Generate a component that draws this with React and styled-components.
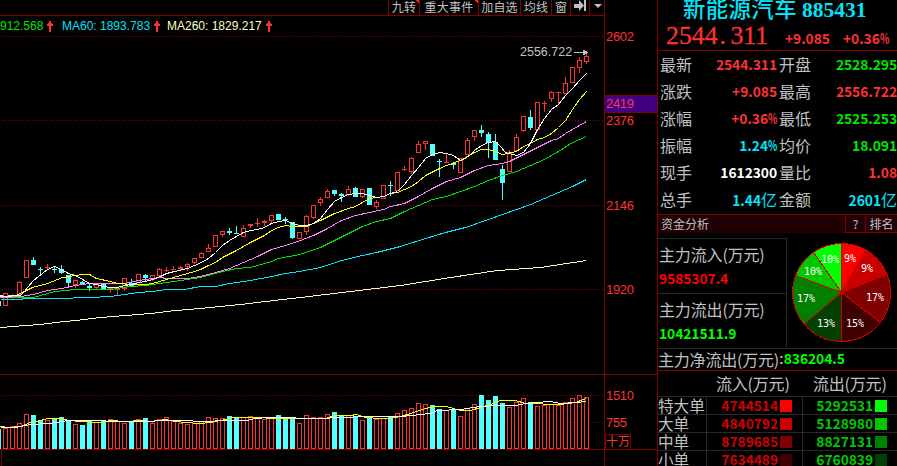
import React from 'react';
import styled, { createGlobalStyle } from 'styled-components';

const C = {
  line: '#800000',
  up: '#ff3232',
  down: '#54ffff',
  cyan: '#00e4f8',
  green: '#00e600',
  lime: '#00ff00',
  grey: '#c0c0c0',
  white: '#ffffff',
  grid: '#282828',
};

const Global = createGlobalStyle`
  html, body { margin: 0; background: #000; overflow: hidden; }
  * { box-sizing: border-box; }
`;

const Screen = styled.div`
  display: flex;
  width: 897px;
  height: 466px;
  overflow: hidden;
  background: #000;
  color: ${C.grey};
  font-family: 'Liberation Sans', 'Noto Sans CJK SC', sans-serif;
  white-space: nowrap;
`;

/* ---------- left: chart ---------- */

const Main = styled.div`
  flex: 0 0 604px;
  display: flex;
  flex-direction: column;
`;

const Toolbar = styled.div`
  display: flex;
  justify-content: flex-end;
  height: 16px;
  border-bottom: 1px solid ${C.line};
`;

const Tool = styled.div`
  width: ${(p) => p.$w}px;
  height: 15px;
  display: flex;
  justify-content: center;
  border-left: 1px solid ${C.line};
  font: 12px/13px 'Noto Sans CJK SC', sans-serif;
  letter-spacing: 0.2px;
  ${(p) =>
    p.$flag &&
    'background: linear-gradient(225deg, #ff2020 2.5px, transparent 2.6px);'}

  svg {
    flex: none;
  }
`;

const Legend = styled.div`
  display: flex;
  align-items: center;
  height: 20px;
  font-size: 12px;
`;

const LegendItem = styled.span`
  display: flex;
  align-items: center;
  width: ${(p) => p.$w}px;
  gap: 4px;
  color: ${(p) => p.$c};
`;

const Plot = styled.svg`
  display: block;
  flex: none;
  text {
    font-family: 'Liberation Sans', 'Noto Sans CJK SC', sans-serif;
  }
`;

const Axis = styled.div`
  flex: 0 0 53px;
  border-left: 1px solid ${C.line};
`;

const UpArrow = () => (
  <svg width="6" height="11" viewBox="0 0 6 11" shapeRendering="crispEdges">
    <path d="M2 0h2v2h1v1h1v2H4v6H2V5H0V3h1V2h1z" fill={C.up} />
  </svg>
);

/* body top, body bottom, high, low, 1 = falling, volume top */
const BARS = [
  [301, 306, 301, 306, 1, 429], [293, 306, 293, 306, 0, 428], [295, 297, 294, 299, 0, 426],
  [282, 295, 281, 295, 0, 423], [260, 278, 260, 278, 0, 414], [260, 265, 257, 265, 1, 415],
  [269, 270, 267, 275, 1, 420], [267, 268, 264, 270, 0, 420], [269, 270, 267, 273, 1, 419],
  [269, 273, 265, 274, 1, 417], [275, 283, 275, 288, 1, 420], [280, 285, 280, 288, 0, 424],
  [282, 284, 281, 284, 1, 425], [286, 288, 283, 291, 1, 421], [284, 288, 284, 290, 0, 422],
  [284, 289, 284, 289, 1, 420], [288, 289, 288, 293, 0, 419], [289, 290, 286, 295, 0, 421],
  [278, 289, 278, 291, 0, 423], [283, 286, 279, 286, 1, 422], [274, 283, 274, 283, 0, 419],
  [275, 278, 274, 281, 1, 418], [275, 280, 275, 281, 0, 423], [269, 276, 268, 276, 0, 419],
  [270, 271, 267, 272, 0, 417], [269, 270, 266, 270, 0, 421], [267, 269, 266, 271, 0, 423],
  [264, 267, 263, 271, 0, 424], [258, 263, 258, 264, 0, 423], [253, 258, 252, 258, 0, 421],
  [248, 252, 244, 252, 0, 417], [235, 247, 235, 247, 0, 418], [231, 235, 231, 237, 0, 418],
  [231, 233, 228, 235, 1, 416], [233, 234, 226, 234, 1, 417], [228, 237, 225, 237, 0, 417],
  [224, 226, 224, 228, 0, 416], [223, 224, 218, 227, 0, 418], [221, 223, 220, 226, 0, 419],
  [215, 221, 215, 223, 0, 417], [214, 220, 214, 220, 1, 415], [219, 220, 217, 224, 1, 417],
  [222, 238, 222, 239, 1, 418], [232, 239, 232, 239, 0, 423], [216, 232, 215, 235, 0, 415],
  [205, 218, 205, 219, 0, 417], [199, 203, 197, 206, 0, 417], [191, 198, 189, 198, 0, 414],
  [190, 194, 190, 196, 1, 412], [194, 196, 193, 202, 1, 415], [189, 195, 186, 196, 0, 415],
  [188, 197, 187, 197, 1, 416], [189, 197, 189, 198, 0, 420], [188, 205, 188, 205, 1, 417],
  [202, 207, 200, 209, 0, 419], [185, 199, 185, 199, 0, 418], [185, 186, 181, 196, 1, 416],
  [172, 191, 172, 191, 0, 413], [169, 170, 166, 171, 0, 410], [158, 172, 157, 174, 0, 408],
  [144, 153, 141, 153, 0, 403], [141, 144, 141, 150, 0, 404], [144, 156, 144, 156, 1, 405],
  [161, 162, 159, 177, 1, 409], [162, 163, 154, 163, 0, 410], [163, 165, 162, 169, 1, 409],
  [158, 173, 158, 173, 0, 416], [140, 155, 138, 155, 0, 408], [130, 137, 130, 141, 0, 404],
  [130, 133, 125, 137, 1, 395], [134, 143, 132, 158, 1, 400], [142, 160, 134, 160, 1, 396],
  [169, 183, 165, 200, 1, 403], [152, 172, 150, 172, 0, 407], [137, 151, 134, 151, 0, 402],
  [116, 131, 116, 132, 0, 398], [117, 128, 110, 130, 1, 402], [102, 130, 102, 130, 0, 406],
  [103, 104, 101, 112, 0, 405], [92, 99, 91, 102, 0, 404], [92, 93, 92, 105, 0, 405],
  [83, 94, 77, 94, 0, 402], [67, 83, 67, 83, 0, 398], [60, 68, 57, 73, 0, 395],
  [56, 62, 53, 64, 0, 397],
];

const PRICE_LINES = [
  ['#ffffb9', '0,327 25,325 40,324 55,322 75,320 100,317 125,315 150,313 175,310 200,308 240,304 282,299 300,297 350,291 400,285 450,277 497,270 540,267 586,260'],
  ['#00e4f8', '0,299 20,299 24,298 70,298 75,297 90,297 110,296 124,294 138,292 152,291 166,289 184,289 200,286 215,286 229,283 250,280 271,276 285,273 299,271 320,267 341,260 362,255 376,252 400,246 425,238 445,232 465,227 488,219 502,214 516,209 530,204 544,198 558,192 572,186 586,179'],
  ['#00e600', '0,297 33,297 54,291 75,289 82,289 110,289 130,286 145,285 152,284 166,282 180,280 200,277 222,271 236,268 250,267 264,263 271,261 278,258 299,254 320,247 334,240 348,233 362,226 376,221 390,218 404,211 418,205 432,199 446,196 460,191 474,186 488,180 502,175 516,171 530,165 544,159 558,151 572,142 586,136'],
  ['#ff80ff', '0,297 20,296 33,294 47,290 61,288 75,285 89,283 110,283 124,283 138,280 152,278 160,277 166,278 187,278 200,276 215,272 229,268 243,262 257,256 271,249 285,245 300,240 313,235 327,228 341,220 355,215 369,212 383,209 390,206 404,203 418,196 432,188 446,181 460,177 474,170 488,165 502,163 509,161 523,154 537,147 551,140 558,138 565,133 572,129 586,121'],
  ['#ffff00', '0,296 15,295 22,292 32,287 47,283 62,277 75,275 82,274 89,274 96,278 110,281 117,283 131,284 145,284 152,283 166,279 180,275 194,271 200,269 208,265 215,262 222,257 236,250 250,242 264,235 271,230 278,227 285,225 292,226 306,226 313,223 320,220 334,213 348,208 355,206 362,202 369,198 376,197 383,196 390,193 397,192 411,186 418,181 425,175 439,168 446,165 460,160 474,152 481,149 488,149 495,151 502,154 516,151 523,146 530,143 537,139 544,137 551,133 558,127 565,120 572,109 579,99 586,91'],
  ['#ffffff', '0,295 4,296 20,295 23,292 33,280 47,269 54,266 61,269 68,273 75,275 82,279 89,283 96,284 103,286 110,287 117,287 124,285 131,284 138,282 145,281 152,279 160,276 166,273 174,271 187,268 194,265 201,262 208,258 215,252 222,245 229,240 236,236 243,232 250,230 257,229 264,227 271,223 278,221 285,220 292,223 299,225 306,225 313,223 320,218 327,209 334,201 341,197 348,194 355,193 362,193 369,195 376,197 383,196 390,193 397,191 404,184 411,175 418,167 425,158 432,154 439,152 446,153 453,155 460,160 467,157 474,150 481,145 488,142 495,141 500,146 505,152 516,155 523,152 530,143 537,129 544,118 551,109 558,104 565,95 572,88 579,80 586,73'],
];

const VOLUME_LINES = [
  ['#ffff00', '0,426 8,427 20,426 30,422 40,420 47,418 62,418 68,420 80,421 100,422 110,420 125,421 140,420 150,421 165,419 175,421 185,422 200,423 210,422 225,419 232,417 260,417 270,418 325,418 335,415 350,415 356,414 365,417 380,418 390,418 400,416 410,413 425,408 435,406 446,406 460,410 470,410 480,407 490,404 500,400 515,400 525,403 560,404 575,402 586,398'],
  ['#ffffff', '0,427 15,427 30,424 50,423 62,421 68,420 100,420 110,421 150,421 160,420 184,420 200,421 210,421 219,420 247,420 254,418 270,417 290,417 300,418 325,418 335,417 350,417 355,416 400,416 412,415 420,414 430,413 437,410 460,409 480,406 497,405 515,405 525,403 535,402 550,401 560,403 575,402 586,401'],
];

const barX = (i) => 7 * (i - 1) + 3;

const Candle = ({ x, bar: [top, bottom, high, low, falling] }) => {
  const color = falling ? C.down : C.up;
  const h = bottom - top;
  const hollow = !falling && h > 2;
  return (
    <g fill={color}>
      {top > high && <rect x={x + 2} y={high} width="1" height={top - high} />}
      {low > bottom && <rect x={x + 2} y={bottom} width="1" height={low - bottom} />}
      {hollow ? (
        <rect x={x + 0.5} y={top + 0.5} width="4" height={h - 1} fill="#000" stroke={color} />
      ) : (
        <rect x={x} y={top} width="5" height={h} />
      )}
    </g>
  );
};

const VolumeBar = ({ x, top, falling }) =>
  falling ? (
    <rect x={x} y={top} width="5" height={449 - top} fill={C.down} />
  ) : (
    <rect x={x + 0.5} y={top + 0.5} width="4" height={448 - top} fill="#000" stroke={C.up} />
  );

const Dotted = ({ y }) => (
  <path d={`M2 ${y + 0.5}H604`} stroke="#900000" strokeDasharray="1 2" />
);

const Curve = ({ color, points }) => (
  <polyline points={points} transform="translate(.5 .5)" fill="none" stroke={color} />
);

const PriceChart = () => (
  <Plot width="604" height="338" viewBox="0 36 604 338">
    <g shapeRendering="crispEdges">
      {[36, 120, 205, 289].map((y) => <Dotted key={y} y={y} />)}
      {BARS.map((b, i) => <Candle key={i} x={barX(i)} bar={b} />)}
      {PRICE_LINES.map(([c, p]) => <Curve key={c} color={c} points={p} />)}
      <path d="M574 52.5H584" stroke={C.grey} />
      <path d="M583 50h2v1h2v1h1v1h-1v1h-2v1h-2z" fill={C.grey} />
    </g>
    <text x="520" y="56" fontSize="12.5" fill={C.grey}>2556.722</text>
  </Plot>
);

const VolumeChart = () => (
  <Plot width="604" height="92" viewBox="0 374 604 92" shapeRendering="crispEdges">
    <path d="M0 374.5H604" stroke={C.line} />
    <Dotted y={395} />
    <Dotted y={422} />
    {BARS.map((b, i) => <VolumeBar key={i} x={barX(i)} top={b[5]} falling={b[4]} />)}
    {VOLUME_LINES.map(([c, p]) => <Curve key={c} color={c} points={p} />)}
    <path d="M0 449.5H604M1.5 450V466" stroke={C.line} />
  </Plot>
);

const AxisScale = () => (
  <Plot width="52" height="466" viewBox="605 0 52 466" fontSize="13" fill={C.up}>
    <g shapeRendering="crispEdges" fill="none" stroke={C.line}>
      <path d="M605 374.5H657M605 449.5H657" />
      <rect x="604.5" y="95.5" width="53" height="17" fill="#400080" />
      <rect x="605.5" y="434.5" width="25" height="15" />
    </g>
    {[[2602, 41], [2376, 125], [2146, 210], [1920, 294], [1510, 400], [755, 427]].map(([t, y]) => (
      <text key={t} x="606" y={y} textLength={t === 755 ? 21 : 28}>{t}</text>
    ))}
    <text x="606" y="108" textLength="28" fill="#ff3260">2419</text>
    <text x="606" y="446" fontSize="12">十万</text>
  </Plot>
);

/* ---------- right: quote panel ---------- */

const Panel = styled.aside`
  flex: 0 0 240px;
  min-width: 0;
  display: flex;
  flex-direction: column;
  border-left: 1px solid ${C.line};
  font-size: 16px;
`;

const Cjk = styled.span`
  font-family: 'Noto Sans CJK SC', sans-serif;
  font-size: ${(p) => p.$fs || 16}px;
  font-weight: 400;
  line-height: ${(p) => p.$lh || 18}px;
  letter-spacing: ${(p) => p.$ls || 0}px;
`;

const Digits = styled.span`
  font: bold 13.8px/17px 'Noto Sans CJK SC', sans-serif;
  letter-spacing: -0.05px;
  color: ${(p) => p.$c};
`;

const Percent = styled.span`
  display: inline-block;
  width: 9px;
  transform: scaleX(0.7);
  transform-origin: 0 50%;
`;

const Num = ({ children, c }) => {
  const unit = children.slice(-1);
  const body = /[%亿]/.test(unit) ? children.slice(0, -1) : children;
  return (
    <Digits $c={c}>
      {body}
      {unit === '%' && <Percent>%</Percent>}
      {unit === '亿' && <Cjk $lh={17}>亿</Cjk>}
    </Digits>
  );
};

const Head = styled.header`
  height: 51px;
  flex: none;
  border-bottom: 1px solid ${C.line};
`;

const Title = styled.div`
  height: 19px;
  padding-left: 25px;
  color: ${C.cyan};
  font: bold 21.5px/15px 'Liberation Serif', 'Noto Sans CJK SC', serif;

  span {
    font: 500 22.4px/15px 'Noto Sans CJK SC', sans-serif;
    letter-spacing: 0.4px;
    margin-right: 5px;
  }
`;

const PriceLine = styled.div`
  display: grid;
  grid-template-columns: 119px 58px 1fr;
  align-items: center;
  height: 31px;
  padding-left: 8px;

  > span {
    margin-top: 5px;
  }
`;

const BigPrice = styled.div`
  font: 25.8px/33px 'Liberation Serif', serif;
  color: ${C.up};
  -webkit-text-stroke: 0.3px ${C.up};
`;

const Dot = styled.span`
  display: inline-block;
  width: 12.8px;
  padding-left: 2px;
`;

const Quotes = styled.div`
  flex: none;
  height: 163px;
`;

const QuoteRow = styled.div`
  display: grid;
  grid-template-columns: 33px 84px 35px 85px;
  align-items: center;
  height: 27px;
  padding-left: 2px;

  > :nth-child(odd) {
    margin-top: -1px;
  }
  > :nth-child(even) {
    text-align: right;
  }
  > :nth-child(3) {
    margin-left: 2px;
  }
`;

const QUOTES = [
  ['最新', '2544.311', C.up, '开盘', '2528.295', C.green],
  ['涨跌', '+9.085', C.up, '最高', '2556.722', C.up],
  ['涨幅', '+0.36%', C.up, '最低', '2525.253', C.green],
  ['振幅', '1.24%', C.cyan, '均价', '18.091', C.green],
  ['现手', '1612300', C.white, '量比', '1.08', C.up],
  ['总手', '1.44亿', C.cyan, '金额', '2601亿', C.cyan],
];

const SectionBar = styled.div`
  flex: none;
  display: flex;
  height: 19px;
  background: #200004;
  border-top: 1px solid ${C.line};
  font: 12px/18px 'Noto Sans CJK SC', sans-serif;
`;

const SectionTitle = styled.div`
  flex: 1;
  padding-left: 3px;
`;

const SectionButton = styled.div`
  width: ${(p) => p.$w}px;
  border-left: 1px solid ${C.line};
  border-bottom: 1px solid ${C.line};
  text-align: center;
`;

const Flow = styled.div`
  flex: none;
  display: grid;
  grid-template-columns: 129px 1fr;
  height: 115px;
`;

const FlowBoxes = styled.div`
  margin-top: 5px;
  border-right: 1px solid ${C.grid};
`;

const FlowBox = styled.div`
  height: 55px;
  padding: 6px 0 0 1px;
  border-top: 1px solid ${C.grid};
  display: flex;
  flex-direction: column;
  gap: 7px;
`;

const NetRow = styled.div`
  flex: none;
  display: flex;
  align-items: center;
  height: 23px;
  padding-bottom: 2px;
  border-top: 1px solid ${C.grid};
  border-bottom: 1px solid ${C.line};

  b {
    font-size: 14px;
  }
`;

const TableHead = styled.div`
  flex: none;
  display: grid;
  grid-template-columns: 97px 1fr;
  height: 25px;
  padding: 3px 0 0 58px;
`;

const Table = styled.div`
  flex: none;
`;

const TableRow = styled.div`
  display: grid;
  grid-template-columns: 48px 96px 95px;
  height: 18px;
  border-top: 1px solid ${C.grid};
  line-height: 17px;
`;

const Cell = styled.div`
  display: flex;
  align-items: center;
  justify-content: flex-end;
  gap: 2px;
  height: 17px;
  padding-right: 10px;
  border-left: 1px solid ${C.grid};
`;

const Swatch = styled.i`
  width: 12px;
  height: 12px;
  background: ${(p) => p.$c};
`;

const ORDERS = [
  ['特大单', '4744514', '#ff0000', '5292531', '#00ff00'],
  ['大单', '4840792', '#c80000', '5128980', '#00c800'],
  ['中单', '8789685', '#800000', '8827131', '#008000'],
  ['小单', '7634489', '#400000', '6760839', '#004000'],
];

/* start angle, end angle, fill, label, label position */
const SLICES = [
  [0, 29.6, '#ff0000', '9%', 850, 262],
  [29.6, 68.2, '#c80000', '9%', 867, 272],
  [68.2, 127.6, '#800000', '17%', 875, 301],
  [127.6, 180.5, '#400000', '15%', 855, 327],
  [180.5, 229.8, '#004000', '13%', 826, 327],
  [229.8, 290.2, '#008000', '17%', 806, 302],
  [290.2, 325.2, '#00c800', '10%', 813, 275],
  [325.2, 360, '#00ff00', '10%', 830, 263],
];

const slicePath = (from, to) => {
  const at = (deg) => {
    const a = (deg * Math.PI) / 180;
    return `${841.5 + 49 * Math.sin(a)} ${292.5 - 49 * Math.cos(a)}`;
  };
  return `M841.5 292.5L${at(from)}A49 49 0 0 1 ${at(to)}Z`;
};

const PieSvg = styled.svg`
  display: block;
  text {
    font: 10px 'DejaVu Sans Mono', monospace;
    fill: #fff;
    text-anchor: middle;
  }
`;

const Pie = () => (
  <PieSvg width="110" height="115" viewBox="787 233 110 115">
    {SLICES.map(([a, b, fill]) => (
      <path key={a} d={slicePath(a, b)} fill={fill} stroke="#d40000" shapeRendering="crispEdges" />
    ))}
    {SLICES.map(([a, , , label, x, y]) => (
      <text key={a} x={x} y={y}>{label}</text>
    ))}
  </PieSvg>
);

export default function App() {
  return (
    <Screen>
      <Global />
      <Main>
        <Toolbar>
          <Tool $w={31} $flag>九转</Tool>
          <Tool $w={59} $flag>重大事件</Tool>
          <Tool $w={42}>加自选</Tool>
          <Tool $w={31}>均线</Tool>
          <Tool $w={19}>窗</Tool>
          <Tool $w={19}>
            <svg width="14" height="12" viewBox="0 0 14 12">
              <path d="M1 4h5V0l5 5.5L6 11V8H1zM11 0h2v11h-2z" fill={C.grey} />
            </svg>
          </Tool>
          <Tool $w={15}>
            <svg width="9" height="12" viewBox="0 0 9 12">
              <path d="M1 4h8L5 8z" fill={C.grey} />
            </svg>
          </Tool>
        </Toolbar>
        <Legend>
          <LegendItem $w={62} $c={C.green}>912.568 <UpArrow /></LegendItem>
          <LegendItem $w={105} $c={C.cyan}>MA60: 1893.783 <UpArrow /></LegendItem>
          <LegendItem $w={110} $c="#ffffb9">MA260: 1829.217 <UpArrow /></LegendItem>
        </Legend>
        <PriceChart />
        <VolumeChart />
      </Main>
      <Axis><AxisScale /></Axis>

      <Panel>
        <Head>
          <Title><span>新能源汽车</span>885431</Title>
          <PriceLine>
            <BigPrice>2544<Dot>.</Dot>311</BigPrice>
            <Num c={C.up}>+9.085</Num>
            <Num c={C.up}>+0.36%</Num>
          </PriceLine>
        </Head>
        <Quotes>
          {QUOTES.map(([l1, v1, c1, l2, v2, c2]) => (
            <QuoteRow key={l1}>
              <Cjk>{l1}</Cjk>
              <Num c={c1}>{v1}</Num>
              <Cjk>{l2}</Cjk>
              <Num c={c2}>{v2}</Num>
            </QuoteRow>
          ))}
        </Quotes>
        <SectionBar>
          <SectionTitle>资金分析</SectionTitle>
          <SectionButton $w={20}>?</SectionButton>
          <SectionButton $w={32}>排名</SectionButton>
        </SectionBar>
        <Flow>
          <FlowBoxes>
            <FlowBox>
              <Cjk $ls={-0.15}>主力流入(万元)</Cjk>
              <Num c="#ff0000">9585307.4</Num>
            </FlowBox>
            <FlowBox>
              <Cjk $ls={-0.15}>主力流出(万元)</Cjk>
              <Num c={C.lime}>10421511.9</Num>
            </FlowBox>
          </FlowBoxes>
          <Pie />
        </Flow>
        <NetRow>
          <Cjk $ls={-0.2}>主力净流出(万元)</Cjk>
          <b>:</b>
          <Num c={C.lime}>836204.5</Num>
        </NetRow>
        <TableHead>
          <Cjk $ls={-0.2}>流入(万元)</Cjk>
          <Cjk $ls={-0.2}>流出(万元)</Cjk>
        </TableHead>
        <Table>
          {ORDERS.map(([name, inflow, red, outflow, green]) => (
            <TableRow key={name}>
              <Cjk $lh={17} $fs={15.6}>{name}</Cjk>
              <Cell><Num c="#d00000">{inflow}</Num><Swatch $c={red} /></Cell>
              <Cell><Num c="#00c800">{outflow}</Num><Swatch $c={green} /></Cell>
            </TableRow>
          ))}
        </Table>
      </Panel>
    </Screen>
  );
}
